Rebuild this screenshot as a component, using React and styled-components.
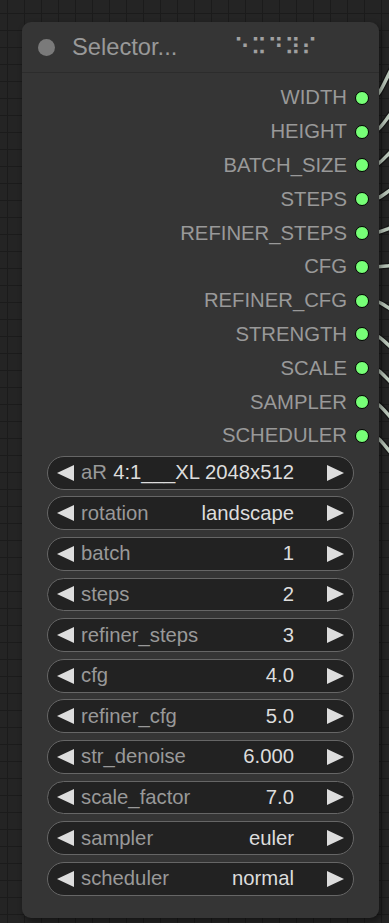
import React from 'react'
import styled, { createGlobalStyle } from 'styled-components'

const GlobalStyle = createGlobalStyle`
  html, body {
    margin: 0;
    padding: 0;
    background: #232323;
  }
`

const Canvas = styled.div`
  position: relative;
  width: 389px;
  height: 923px;
  overflow: hidden;
  padding: 22px 0 0 22px;
  box-sizing: border-box;
  background-color: #242424;
  background-image:
    linear-gradient(to right, #1b1b1b 1px, transparent 1px),
    linear-gradient(to bottom, #1b1b1b 1px, transparent 1px);
  background-size: 17px 17px;
  background-position: 7px 13px;
  font-family: "Liberation Sans", Arial, sans-serif;
`

const Links = styled.svg`
  position: absolute;
  left: 0;
  top: 0;
  z-index: 0;
`

const Node = styled.div`
  position: relative;
  z-index: 1;
  width: 357px;
  height: 896px;
  background: #353535;
  border-radius: 9px;
  box-shadow: 2px 3px 6px rgba(0, 0, 0, 0.45);
  display: flex;
  flex-direction: column;
`

const Title = styled.div`
  height: 50px;
  border-bottom: 1px solid #2c2c2c;
  display: flex;
  align-items: center;
  padding-left: 16px;
`

const TitleDot = styled.span`
  width: 17px;
  height: 17px;
  border-radius: 50%;
  background: #7a7a7a;
  flex-shrink: 0;
`

const TitleText = styled.span`
  margin-left: 17px;
  font-size: 23.7px;
  color: #999;
  white-space: nowrap;
`

const Braille = styled.span`
  margin-left: 56px;
  font-family: "DejaVu Sans", sans-serif;
  font-size: 23px;
  color: #a0a0a0;
  white-space: nowrap;
`

const Outputs = styled.div`
  padding-top: 8px;
  display: flex;
  flex-direction: column;
`

const OutRow = styled.div`
  height: 33.8px;
  display: flex;
  align-items: center;
  justify-content: flex-end;
  padding-right: 10px;
  font-size: 20.3px;
  color: #999;
`

const Slot = styled.span`
  width: 12px;
  height: 12px;
  margin-left: 8px;
  border-radius: 50%;
  background: #7f7;
  border: 1.5px solid #000;
`

const Widgets = styled.div`
  margin-top: 3px;
  padding: 0 25px 0 25px;
  display: flex;
  flex-direction: column;
  gap: 6.8px;
`

const Widget = styled.div`
  height: 33.8px;
  box-sizing: border-box;
  border: 1px solid #666;
  border-radius: 17px;
  background: #222;
  display: flex;
  align-items: center;
  padding: 0 9px;
  font-size: 20.3px;
`

const Arrow = styled.span`
  width: 0;
  height: 0;
  flex-shrink: 0;
  border-top: 8px solid transparent;
  border-bottom: 8px solid transparent;
  ${p => (p.$dir === 'left'
    ? 'border-right: 17px solid #ddd;'
    : 'border-left: 17px solid #ddd;')}
`

const Label = styled.span`
  margin-left: 7px;
  color: #999;
  white-space: nowrap;
`

const Value = styled.span`
  margin-left: auto;
  margin-right: 33px;
  color: #ddd;
  white-space: pre;
`

const outputs = [
  'WIDTH', 'HEIGHT', 'BATCH_SIZE', 'STEPS', 'REFINER_STEPS', 'CFG',
  'REFINER_CFG', 'STRENGTH', 'SCALE', 'SAMPLER', 'SCHEDULER',
]

const widgets = [
  ['aR', '4:1___XL 2048x512'],
  ['rotation', 'landscape'],
  ['batch', '1'],
  ['steps', '2'],
  ['refiner_steps', '3'],
  ['cfg', '4.0'],
  ['refiner_cfg', '5.0'],
  ['str_denoise', '6.000'],
  ['scale_factor', '7.0'],
  ['sampler', 'euler'],
  ['scheduler', 'normal'],
]

// rise of each link over the last few pixels: top ones go up, bottom ones down
const linkSlopes = [-20, -13, -10, -7, -4, -1, 6, 9, 10, 11, 12]

const App = () => {
  return (
    <Canvas>
      <GlobalStyle />
      <Links width="389" height="923">
        {linkSlopes.map((dy, i) => {
          const y = 98 + i * 33.8
          const d = `M 370 ${y} C 380 ${y}, 382 ${y + dy * 0.6}, 395 ${y + dy * 1.8}`
          return (
            <g key={i} fill="none">
              <path d={d} stroke="#161616" strokeWidth="6" />
              <path d={d} stroke="#b9c6b9" strokeWidth="3.5" />
            </g>
          )
        })}
      </Links>
      <Node>
        <Title>
          <TitleDot />
          <TitleText>Selector...</TitleText>
          <Braille>⠑⠭⠙⠽⠎</Braille>
        </Title>
        <Outputs>
          {outputs.map(name => (
            <OutRow key={name}>
              {name}
              <Slot />
            </OutRow>
          ))}
        </Outputs>
        <Widgets>
          {widgets.map(([label, value]) => (
            <Widget key={label}>
              <Arrow $dir="left" />
              <Label>{label}</Label>
              <Value>{value}</Value>
              <Arrow $dir="right" />
            </Widget>
          ))}
        </Widgets>
      </Node>
    </Canvas>
  )
}

export default App
